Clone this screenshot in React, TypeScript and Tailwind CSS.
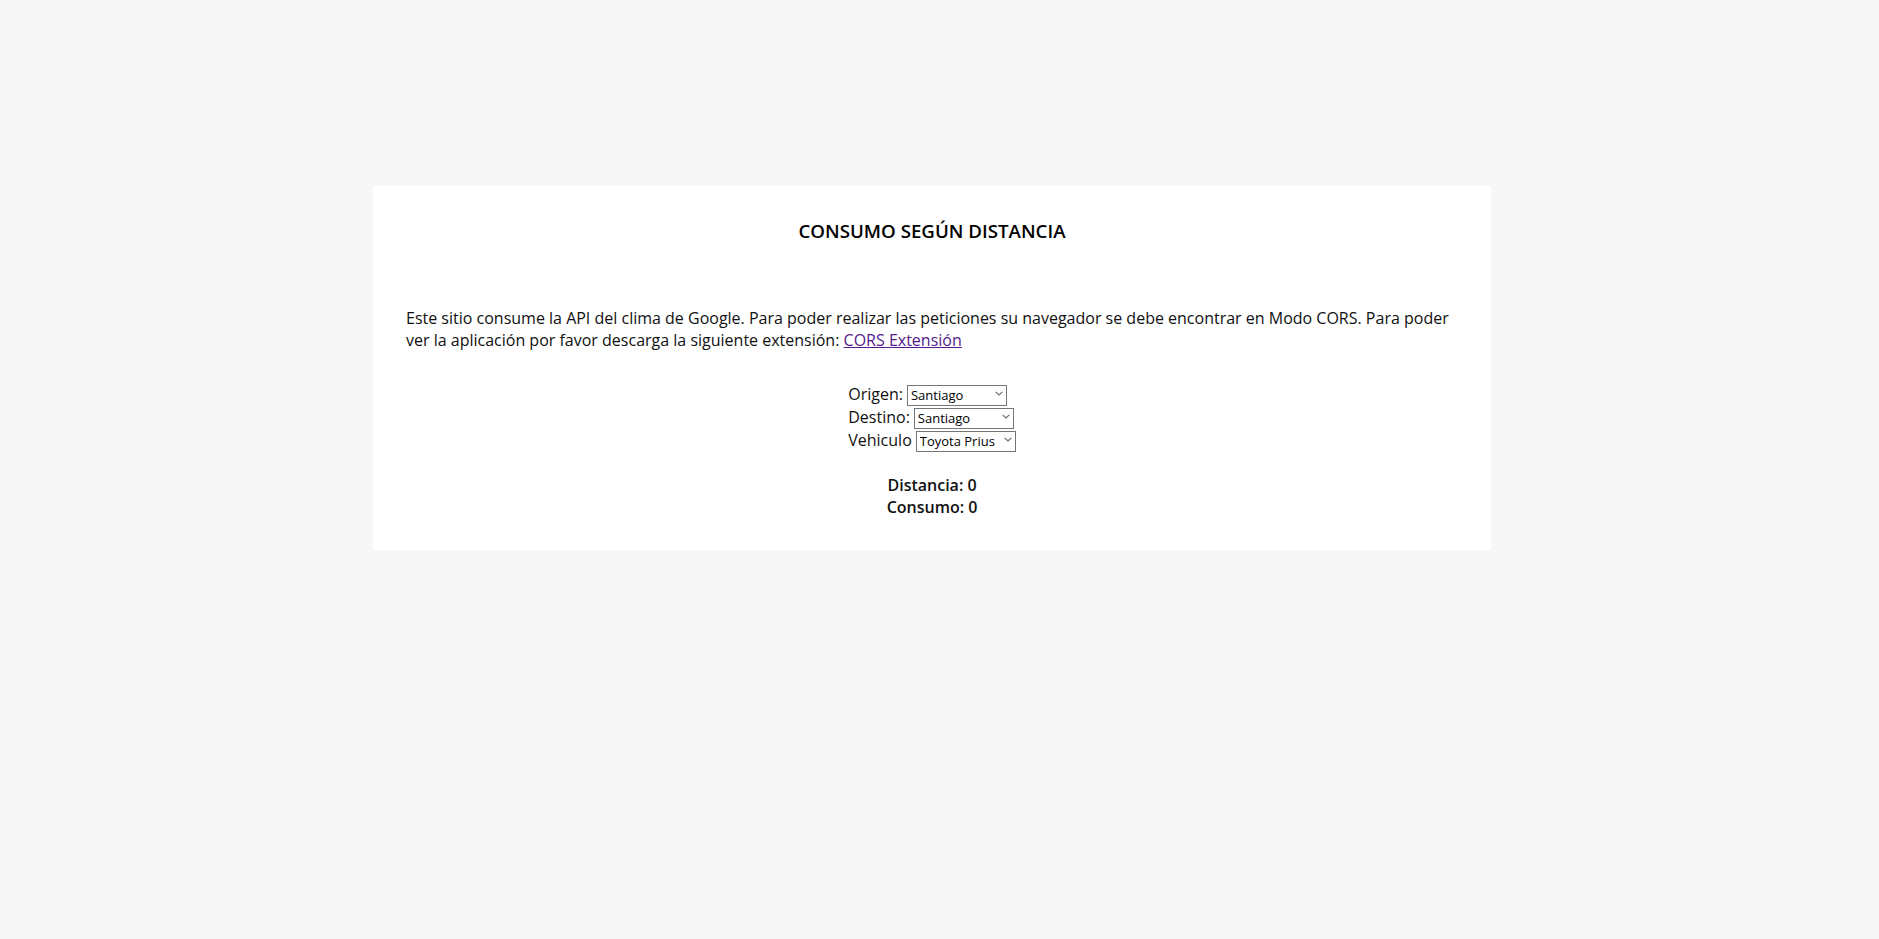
import React from "react";

function Select({ value, options }: { value: string; options: string[] }) {
  return (
    <span className="relative inline-block align-middle">
      <select
        defaultValue={value}
        className="appearance-none w-[100px] h-[21px] border border-[#767676] bg-white pl-[3px] pr-[14px] text-[13px] leading-[19px] text-black outline-none"
        style={{ fontFamily: '"Open Sans", sans-serif' }}
      >
        {options.map((o) => (
          <option key={o}>{o}</option>
        ))}
      </select>
      <svg
        className="pointer-events-none absolute right-[4px] top-[9px]"
        width="8"
        height="5"
        viewBox="0 0 8 5"
        fill="none"
      >
        <path d="M0.6 0.8 L4 4 L7.4 0.8" stroke="#6b6b6b" strokeWidth="1.1" />
      </svg>
    </span>
  );
}

export default function App() {
  const cities = ["Santiago", "Valparaíso", "Concepción"];
  const cars = ["Toyota Prius", "Nissan Leaf"];
  return (
    <div
      className="min-h-screen bg-[#f7f7f7] pt-[186px] text-[#111]"
      style={{ fontFamily: '"Open Sans", sans-serif' }}
    >
      <div className="ml-[373px] w-[1118px] bg-white px-[33px] pt-[34px] pb-[32px]">
        <h1 className="text-center text-[18.72px] leading-[22px] font-semibold text-black">
          CONSUMO SEGÚN DISTANCIA
        </h1>
        <p className="mt-[65px] text-[16px] leading-[22px]">
          Este sitio consume la API del clima de Google. Para poder realizar las peticiones su navegador se debe
          encontrar en Modo CORS. Para poder ver la aplicación por favor descarga la siguiente extensión:{" "}
          <a href="#" className="text-[#551a8b] underline">
            CORS Extensión
          </a>
        </p>
        <div className="mt-[31px] text-center">
          <div className="inline-block text-left text-[16px]">
            <div className="flex h-[23px] items-center gap-[4px]">
              <span>Origen:</span>
              <Select value="Santiago" options={cities} />
            </div>
            <div className="flex h-[23px] items-center gap-[4px]">
              <span>Destino:</span>
              <Select value="Santiago" options={cities} />
            </div>
            <div className="flex h-[23px] items-center gap-[4px]">
              <span>Vehiculo</span>
              <Select value="Toyota Prius" options={cars} />
            </div>
          </div>
        </div>
        <div className="mt-[22px] text-center text-[16px] leading-[22px] font-semibold">
          <div>Distancia: 0</div>
          <div>Consumo: 0</div>
        </div>
      </div>
    </div>
  );
}
